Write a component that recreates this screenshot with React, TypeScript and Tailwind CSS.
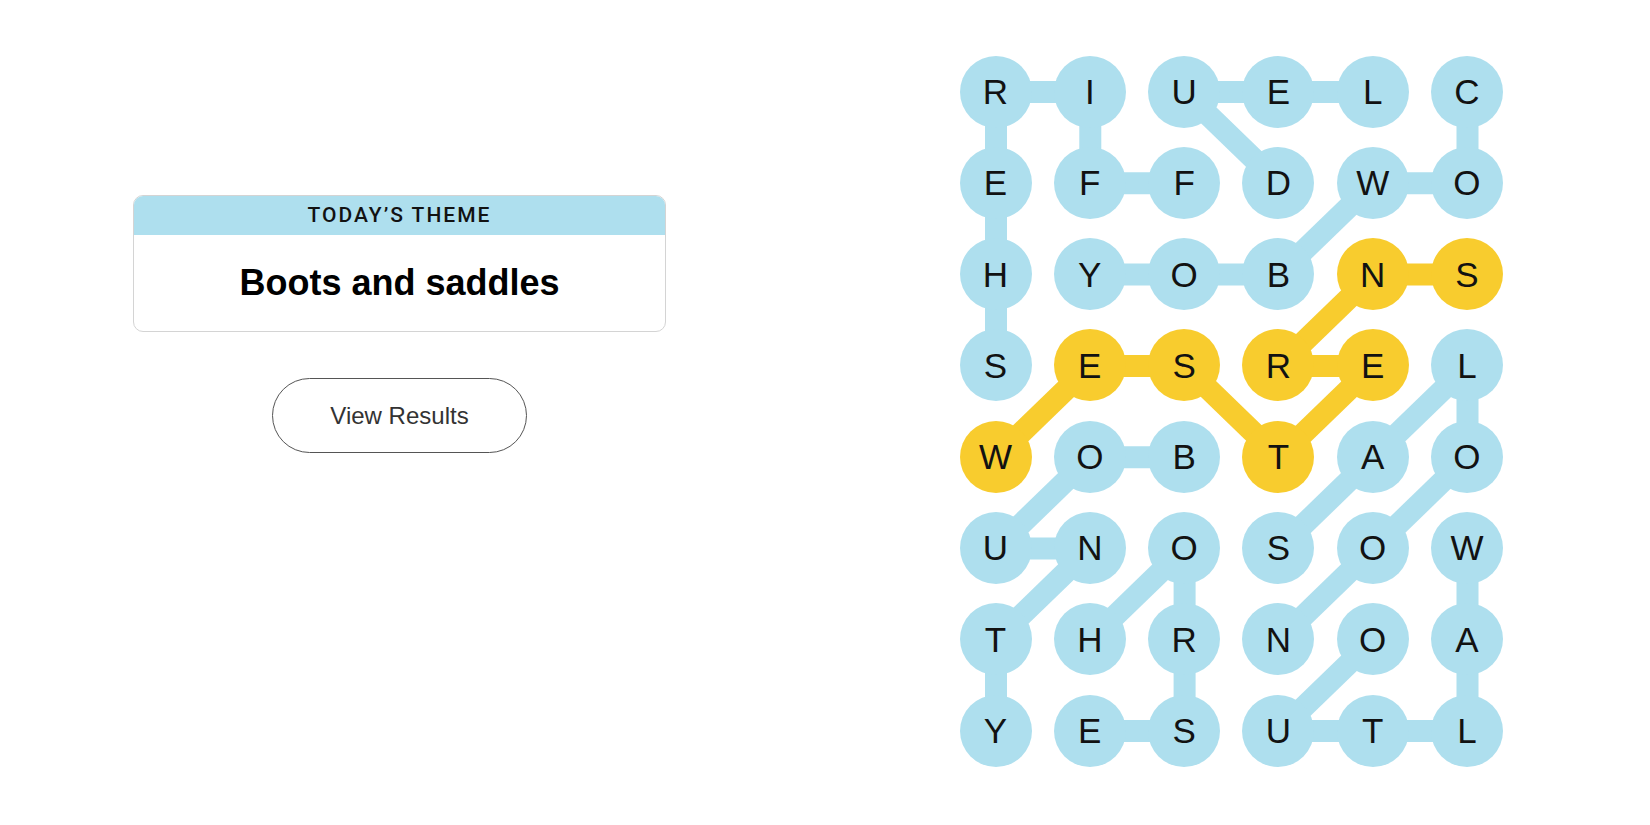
import React from 'react';

const letters = [
  'RIUELC',
  'EFFDWO',
  'HYOBNS',
  'SESREL',
  'WOBTAO',
  'UNOSOW',
  'THRNOA',
  'YESUTL',
];

// cells that belong to the spangram
const spangram = ['4,0', '3,1', '3,2', '4,3', '3,4', '3,3', '2,4', '2,5'];

// found words: each is a path of [row, col] cells
const words: { path: [number, number][]; gold?: boolean }[] = [
  { path: [[3, 0], [2, 0], [1, 0], [0, 0], [0, 1], [1, 1], [1, 2]] },
  { path: [[1, 3], [0, 2], [0, 3], [0, 4]] },
  { path: [[0, 5], [1, 5], [1, 4], [2, 3], [2, 2], [2, 1]] },
  { path: [[4, 0], [3, 1], [3, 2], [4, 3], [3, 4], [3, 3], [2, 4], [2, 5]], gold: true },
  { path: [[5, 3], [4, 4], [3, 5], [4, 5], [5, 4], [6, 3]] },
  { path: [[6, 4], [7, 3], [7, 4], [7, 5], [6, 5], [5, 5]] },
  { path: [[4, 2], [4, 1], [5, 0], [5, 1], [6, 0], [7, 0]] },
  { path: [[6, 1], [5, 2], [6, 2], [7, 2], [7, 1]] },
];

const STEP_X = 94.3;
const STEP_Y = 91.3;
const R = 36;
const W = 36 * 2 + 5 * STEP_X;
const H = 36 * 2 + 7 * STEP_Y;

function Board() {
  const cx = (c: number) => R + c * STEP_X;
  const cy = (r: number) => R + r * STEP_Y;

  return (
    <div className="relative w-[543.5px] h-[711px]">
      <svg className="absolute inset-0" width={W} height={H}>
        {words.map((w, i) =>
          w.path.slice(1).map(([r, c], j) => {
            const [pr, pc] = w.path[j];
            return (
              <line
                key={`${i}-${j}`}
                x1={cx(pc)}
                y1={cy(pr)}
                x2={cx(c)}
                y2={cy(r)}
                stroke={w.gold ? '#f8cc2e' : '#aedfee'}
                strokeWidth={22}
              />
            );
          })
        )}
      </svg>
      <div className="relative grid grid-cols-[repeat(6,72px)] gap-x-[22.3px] gap-y-[19.3px]">
        {letters.map((row, r) =>
          row.split('').map((ch, c) => {
            const gold = spangram.includes(`${r},${c}`);
            return (
              <div
                key={`${r}-${c}`}
                className={`w-[72px] h-[72px] rounded-full flex items-center justify-center text-[35px] leading-none text-[#121212] ${
                  gold ? 'bg-[#f8cc2e]' : 'bg-[#aedfee]'
                }`}
              >
                {ch}
              </div>
            );
          })
        )}
      </div>
    </div>
  );
}

export default function App() {
  return (
    <div className="flex w-[1650px] h-[825px] bg-white font-['Liberation_Sans',Arial,sans-serif] overflow-hidden">
      <div className="w-[959.5px] shrink-0 pl-[133px] pt-[195px]">
        <div className="w-[533px] flex flex-col items-center">
          <div className="w-full rounded-[10px] border border-[#d4d4d4] overflow-hidden">
            <div className="h-[39px] bg-[#aedfee] flex items-center justify-center font-['Roboto',sans-serif] text-[21px] font-medium tracking-[2px] text-[#121212]">
              TODAY’S THEME
            </div>
            <div className="h-[96px] flex items-center justify-center text-[36px] font-bold text-black">
              Boots and saddles
            </div>
          </div>
          <button className="mt-[46px] w-[255px] h-[75px] rounded-full border border-[#555] text-[24px] text-[#333] bg-white">
            View Results
          </button>
        </div>
      </div>
      <div className="pt-[55.5px]">
        <Board />
      </div>
    </div>
  );
}
